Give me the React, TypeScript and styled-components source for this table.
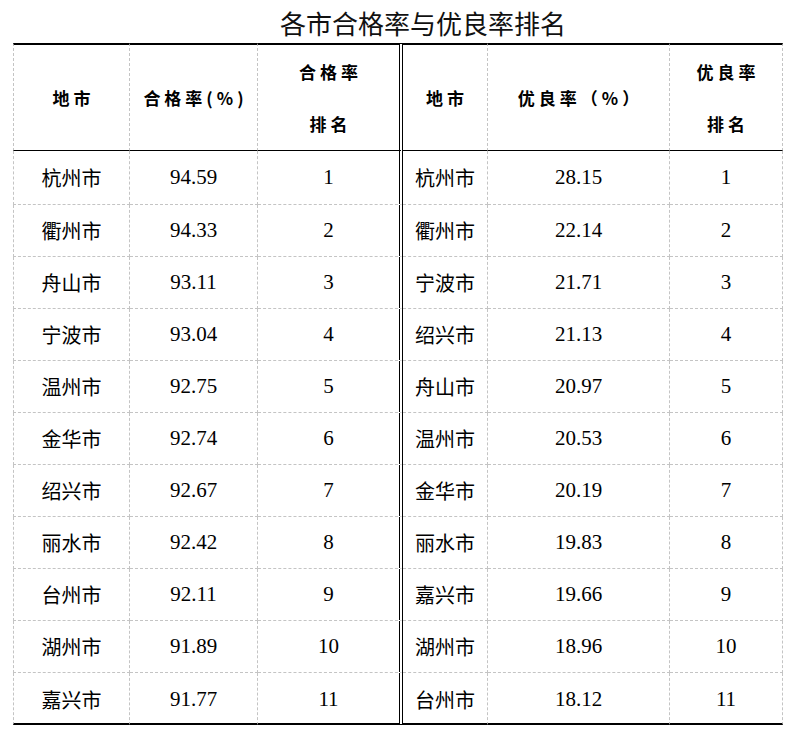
import React from "react";
import styled, { createGlobalStyle } from "styled-components";

const Global = createGlobalStyle`
  html, body { margin: 0; padding: 0; background: #fff; }
  body { font-family: "Noto Sans CJK SC", "Noto Sans", sans-serif; color: #000; }
`;

const Page = styled.div`
  padding-left: 13px;
  width: 770px;
`;

const Title = styled.div`
  height: 43px;
  line-height: 46px;
  text-align: center;
  padding-left: 50px;
  font-size: 26px;
  font-family: "Noto Sans CJK SC", sans-serif;
  color: #111;
`;

const Grid = styled.div`
  display: grid;
  grid-template-columns: 117px 128px 145px 85px 182px 113px;
`;

const dash = "1px dashed #c4c4c4";

const HeadCell = styled.div<{ $first?: boolean; $split?: boolean }>`
  box-sizing: border-box;
  height: 108px;
  border-top: 2px solid #000;
  border-bottom: 1px solid #000;
  border-left: ${(p) => (p.$first ? dash : "none")};
  border-right: ${(p) => (p.$split ? "4px double #000" : dash)};
  display: flex;
  flex-direction: column;
  align-items: center;
  justify-content: center;
  font-family: "Noto Sans CJK SC", serif;
  font-weight: 700;
  font-size: 17px;
  letter-spacing: 4px;
  line-height: 52px;
  padding-left: 4px;
`;

const Cell = styled.div<{ $first?: boolean; $split?: boolean; $bottom?: boolean; $tall?: boolean; $num?: boolean }>`
  box-sizing: border-box;
  height: ${(p) => (p.$tall ? 54 : 52)}px;
  border-left: ${(p) => (p.$first ? dash : "none")};
  border-right: ${(p) => (p.$split ? "4px double #000" : dash)};
  border-bottom: ${(p) => (p.$bottom ? "2px solid #000" : dash)};
  display: flex;
  align-items: center;
  justify-content: center;
  font-family: ${(p) =>
    p.$num ? '"Liberation Serif", "Times New Roman", serif' : '"Noto Sans CJK SC", sans-serif'};
  font-size: ${(p) => (p.$num ? 21 : 20)}px;
  color: #000;
  padding-top: ${(p) => (p.$bottom ? 2 : 0)}px;
`;

type Row = [string, string, string, string, string, string];

const rows: Row[] = [
  ["杭州市", "94.59", "1", "杭州市", "28.15", "1"],
  ["衢州市", "94.33", "2", "衢州市", "22.14", "2"],
  ["舟山市", "93.11", "3", "宁波市", "21.71", "3"],
  ["宁波市", "93.04", "4", "绍兴市", "21.13", "4"],
  ["温州市", "92.75", "5", "舟山市", "20.97", "5"],
  ["金华市", "92.74", "6", "温州市", "20.53", "6"],
  ["绍兴市", "92.67", "7", "金华市", "20.19", "7"],
  ["丽水市", "92.42", "8", "丽水市", "19.83", "8"],
  ["台州市", "92.11", "9", "嘉兴市", "19.66", "9"],
  ["湖州市", "91.89", "10", "湖州市", "18.96", "10"],
  ["嘉兴市", "91.77", "11", "台州市", "18.12", "11"],
];

const Line = styled.span`
  display: block;
`;

export default function App() {
  return (
    <>
      <Global />
      <Page>
        <Title>各市合格率与优良率排名</Title>
        <Grid>
          <HeadCell $first>地市</HeadCell>
          <HeadCell>合格率(%)</HeadCell>
          <HeadCell $split>
            <Line>合格率</Line>
            <Line>排名</Line>
          </HeadCell>
          <HeadCell>地市</HeadCell>
          <HeadCell>优良率（%）</HeadCell>
          <HeadCell>
            <Line>优良率</Line>
            <Line>排名</Line>
          </HeadCell>
          {rows.map((r, i) => {
            const bottom = i === rows.length - 1;
            const tall = i === 0;
            return (
              <React.Fragment key={i}>
                <Cell $first $bottom={bottom} $tall={tall}>{r[0]}</Cell>
                <Cell $num $bottom={bottom} $tall={tall}>{r[1]}</Cell>
                <Cell $num $split $bottom={bottom} $tall={tall}>{r[2]}</Cell>
                <Cell $bottom={bottom} $tall={tall}>{r[3]}</Cell>
                <Cell $num $bottom={bottom} $tall={tall}>{r[4]}</Cell>
                <Cell $num $bottom={bottom} $tall={tall}>{r[5]}</Cell>
              </React.Fragment>
            );
          })}
        </Grid>
      </Page>
    </>
  );
}
